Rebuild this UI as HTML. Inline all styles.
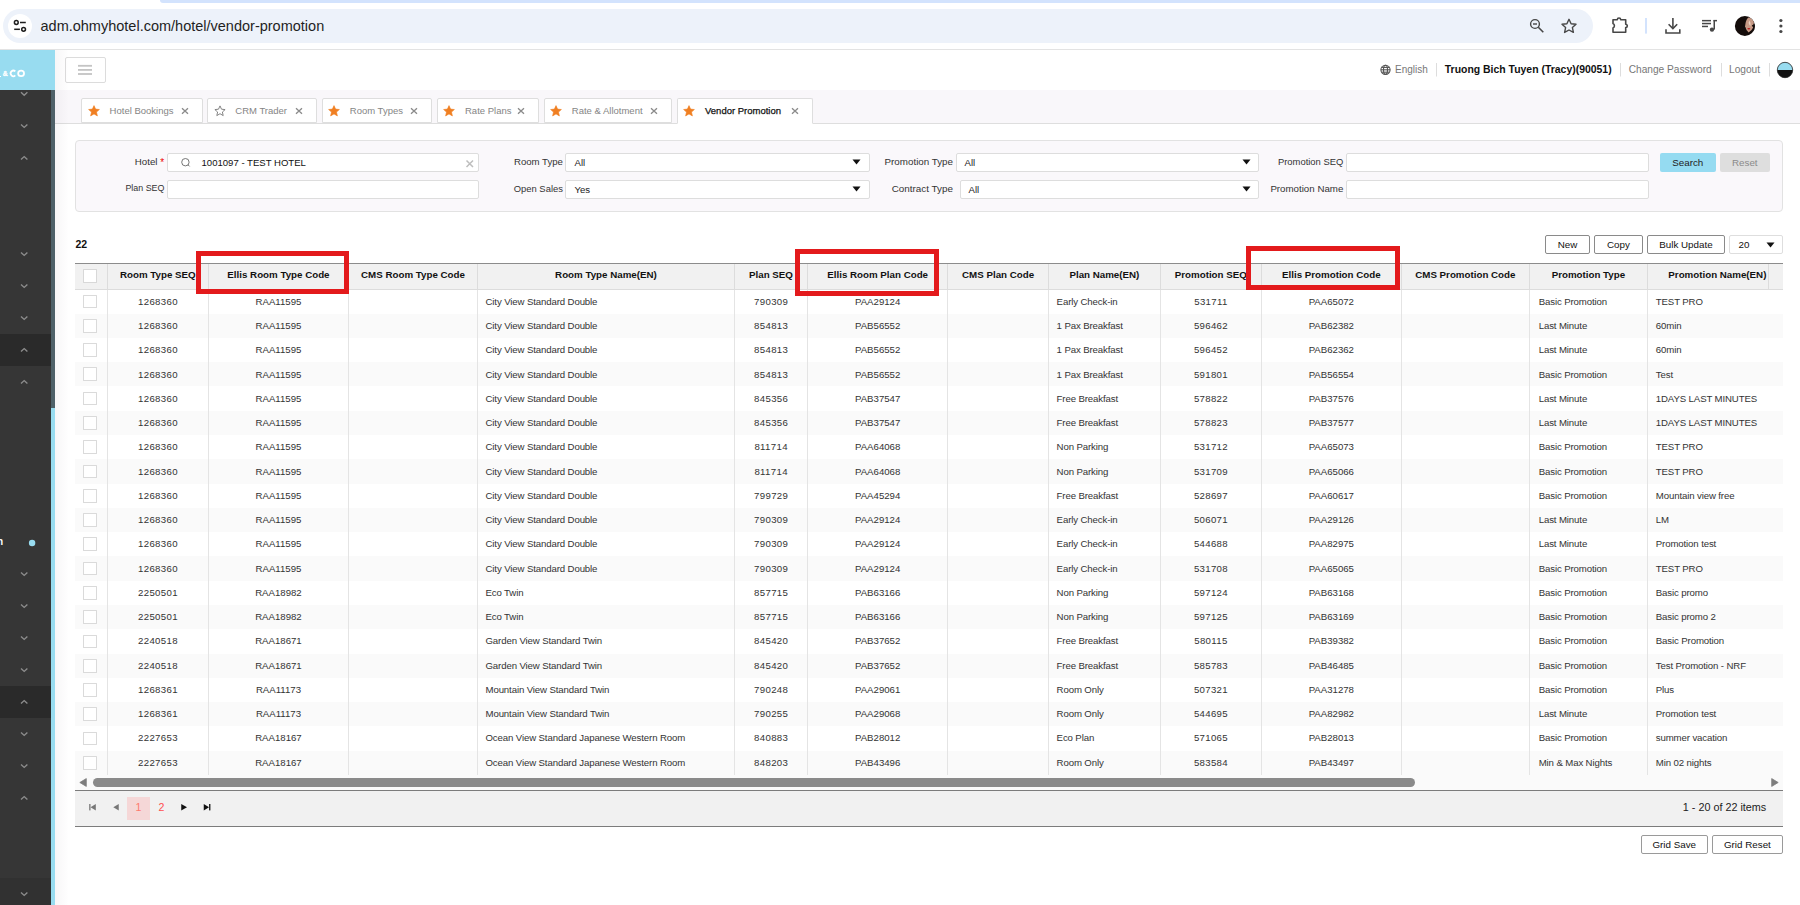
<!DOCTYPE html><html><head><meta charset="utf-8"><style>

*{box-sizing:border-box}
html,body{margin:0;padding:0}
body{width:1800px;height:905px;overflow:hidden;position:relative;background:#fff;font-family:"Liberation Sans", sans-serif;color:#222}
.a{position:absolute}
.t{position:absolute;white-space:nowrap;line-height:1}
svg{position:absolute;overflow:visible}

</style></head><body>
<div class="a" style="left:160px;top:0;width:1640px;height:3px;background:#d3e3fd;border-bottom-left-radius:6px"></div>
<div class="a" style="left:3px;top:9px;width:1590px;height:34px;border-radius:17px;background:#edf2fa"></div>
<div class="a" style="left:8px;top:14px;width:24px;height:24px;border-radius:12px;background:#fff"></div>
<svg style="left:0;top:0" width="40" height="50"><g fill="none" stroke="#1f1f1f" stroke-width="1.5"><circle cx="16.3" cy="22.5" r="1.9"/><circle cx="23.6" cy="29.3" r="1.9"/><line x1="20" y1="22.5" x2="25.8" y2="22.5"/><line x1="14.2" y1="29.3" x2="19.9" y2="29.3"/></g></svg>
<div class="t" style="left:40.5px;top:19px;font-size:14.5px;color:#1f1f1f">adm.ohmyhotel.com/hotel/vendor-promotion</div>
<svg style="left:0;top:0" width="1800" height="50"><g fill="none" stroke="#474747" stroke-width="1.4"><circle cx="1535" cy="24" r="4.4"/><line x1="1533" y1="24" x2="1537" y2="24"/><line x1="1538.3" y1="27.3" x2="1543.3" y2="32.2" stroke-width="1.6"/><path d="M1569 19.3 L1571.1 23.7 L1576 24.3 L1572.4 27.6 L1573.4 32.4 L1569 30 L1564.6 32.4 L1565.6 27.6 L1562 24.3 L1566.9 23.7 Z" stroke-linejoin="round"/><path d="M1613 19.7 H1617.3 A1.7 1.7 0 0 1 1620.7 19.7 H1625.7 V24.3 A1.6 1.6 0 0 1 1625.7 27.5 V32.3 H1613 V28 A2.5 2.5 0 0 0 1613 23.5 Z" stroke-width="1.6" stroke-linejoin="round"/></g><rect x="1645" y="18" width="2" height="15.6" fill="#d3e3fd"/><g fill="none" stroke="#474747" stroke-width="1.6"><line x1="1672.9" y1="18" x2="1672.9" y2="28.5"/><path d="M1668.6 24.3 L1672.9 28.6 L1677.2 24.3"/><path d="M1666 29.3 V33 H1679.8 V29.3"/></g><g fill="#474747"><rect x="1702" y="19.9" width="9" height="1.5"/><rect x="1702" y="22.8" width="9" height="1.5"/><rect x="1702" y="25.7" width="6" height="1.5"/><rect x="1713.5" y="20" width="1.5" height="9.5"/><rect x="1713.5" y="19.9" width="3.5" height="1.5"/><circle cx="1712" cy="29.6" r="2.2"/><circle cx="1780.9" cy="20.5" r="1.6"/><circle cx="1780.9" cy="26" r="1.6"/><circle cx="1780.9" cy="31.5" r="1.6"/></g><defs><clipPath id="av"><circle cx="1744.9" cy="26" r="10"/></clipPath></defs><g clip-path="url(#av)"><rect x="1734" y="15" width="22" height="22" fill="#140c0a"/><path d="M1748.3 17.6 Q1752.3 17.8 1753.9 21.8 L1753.4 27 Q1751.6 31.2 1748.6 32.6 Q1746.1 30.2 1745.1 26.2 Q1745.5 20.3 1748.3 17.6 Z" fill="#c79a86"/><path d="M1749.5 20.5 Q1750.8 22.5 1750.5 26 Q1749.2 25 1748.6 23 Z" fill="#ecd2c2"/><path d="M1751.8 25.5 Q1754.5 28 1753.2 33.5 L1756 36 L1756 23 Z" fill="#140c0a"/><ellipse cx="1748.8" cy="28.7" rx="1.5" ry="0.75" fill="#b5181a"/></g></svg>
<div class="a" style="left:0;top:49px;width:1800px;height:1px;background:#e3e3e3"></div>
<div class="a" style="left:0;top:50px;width:55px;height:40px;background:#98dcf0"></div>
<div class="t" style="left:2.8px;top:70.6px;font-size:6.8px;font-weight:700;color:#fff;-webkit-text-stroke:0.3px #fff">&amp;</div><div class="a" style="left:0;top:75.5px;width:1.2px;height:1.5px;background:#fff"></div>
<svg style="left:0;top:0" width="55" height="90"><g fill="none" stroke="#fff" stroke-width="1.75"><path d="M15.3 71.4 A2.75 2.75 0 1 0 15.3 75.4"/><ellipse cx="21.1" cy="73.4" rx="2.95" ry="2.7"/></g></svg>
<div class="a" style="left:0;top:90px;width:51px;height:815px;background:#363636"></div>
<div class="a" style="left:51px;top:90px;width:4px;height:318px;background:#4f6169"></div>
<div class="a" style="left:51px;top:408px;width:4px;height:497px;background:#98dcf0"></div>
<div class="a" style="left:0;top:334px;width:51px;height:32px;background:#2a2a2a"></div>
<div class="a" style="left:0;top:686px;width:51px;height:32px;background:#2a2a2a"></div>
<div class="a" style="left:0;top:878px;width:51px;height:27px;background:#313131"></div>
<svg style="left:0;top:0" width="55" height="905"><path d="M21 92.2 L24.2 95.2 L27.4 92.2 M21 124.4 L24.2 127.4 L27.4 124.4 M21 159.6 L24.2 156.6 L27.4 159.6 M21 252.4 L24.2 255.4 L27.4 252.4 M21 284.4 L24.2 287.4 L27.4 284.4 M21 316.4 L24.2 319.4 L27.4 316.4 M21 351.6 L24.2 348.6 L27.4 351.6 M21 383.6 L24.2 380.6 L27.4 383.6 M21 572.4 L24.2 575.4 L27.4 572.4 M21 604.4 L24.2 607.4 L27.4 604.4 M21 636.4 L24.2 639.4 L27.4 636.4 M21 668.4 L24.2 671.4 L27.4 668.4 M21 703.6 L24.2 700.6 L27.4 703.6 M21 732.4 L24.2 735.4 L27.4 732.4 M21 764.4 L24.2 767.4 L27.4 764.4 M21 799.6 L24.2 796.6 L27.4 799.6 M21 892.4 L24.2 895.4 L27.4 892.4" fill="none" stroke="#8c8c8c" stroke-width="1.4"/><circle cx="32.1" cy="543" r="3.2" fill="#98dcf0"/></svg>
<div class="t" style="left:-3px;top:536.5px;font-size:10px;font-weight:700;color:#fff">n</div>
<div class="a" style="left:65px;top:57px;width:40.5px;height:26px;border:1px solid #dcdcdc;border-radius:2px;background:#fff"></div>
<svg style="left:0;top:0" width="120" height="90"><g fill="#c4c4c4"><rect x="78" y="64.9" width="14" height="1.8"/><rect x="78" y="69" width="14" height="1.8"/><rect x="78" y="73.1" width="14" height="1.8"/></g></svg>
<svg style="left:0;top:0" width="1800" height="90"><g fill="none" stroke="#555" stroke-width="1.1"><circle cx="1385.5" cy="69.8" r="4.6"/><ellipse cx="1385.5" cy="69.8" rx="2" ry="4.6"/><line x1="1380.9" y1="69.8" x2="1390.1" y2="69.8"/><line x1="1381.5" y1="67.4" x2="1389.5" y2="67.4"/><line x1="1381.5" y1="72.2" x2="1389.5" y2="72.2"/></g><g fill="#ddd"><rect x="1436" y="63" width="1" height="13.5"/><rect x="1620" y="63" width="1" height="13.5"/><rect x="1721" y="63" width="1" height="13.5"/><rect x="1769" y="63" width="1" height="13.5"/></g><path d="M1777.3 70 A7.7 7.7 0 0 1 1792.7 70 Z" fill="#98dcf0"/><path d="M1777.3 70 A7.7 7.7 0 0 0 1792.7 70 Z" fill="#111"/><circle cx="1785" cy="70" r="7.7" fill="none" stroke="#222" stroke-width="0.8"/></svg>
<div class="t" style="left:1395px;top:64.5px;font-size:10px;color:#777">English</div>
<div class="t" style="left:1444.8px;top:64.5px;font-size:10.45px;font-weight:700;color:#111">Truong Bich Tuyen (Tracy)(90051)</div>
<div class="t" style="left:1628.7px;top:64.5px;font-size:10.16px;color:#777">Change Password</div>
<div class="t" style="left:1729px;top:64.5px;font-size:10.16px;color:#777">Logout</div>
<div class="a" style="left:55px;top:90px;width:1745px;height:34px;background:#f9f7fa;border-bottom:1px solid #dedede"></div>
<div class="a" style="left:81.3px;top:98px;width:121.9px;height:25.3px;background:#fff;border:1px solid #dedede;border-radius:2px 2px 0 0"></div>
<svg style="left:87.8px;top:104.5px" width="12" height="12"><path d="M6 0.6 L7.6 4.1 L11.4 4.5 L8.5 7.1 L9.4 10.9 L6 8.9 L2.6 10.9 L3.5 7.1 L0.6 4.5 L4.4 4.1 Z" fill="#f07f22" stroke="#f07f22" stroke-width="0.6" stroke-linejoin="round"/></svg>
<div class="t" style="left:109.6px;top:106px;font-size:9.5px;color:#858585;">Hotel Bookings</div>
<svg style="left:180.9px;top:107px" width="8" height="8"><path d="M1 1.2 L7 6.8 M7 1.2 L1 6.8" stroke="#8a8a8a" stroke-width="1.3"/></svg>
<div class="a" style="left:207px;top:98px;width:109.8px;height:25.3px;background:#fff;border:1px solid #dedede;border-radius:2px 2px 0 0"></div>
<svg style="left:213.5px;top:104.5px" width="12" height="12"><path d="M6 0.9 L7.5 4.2 L11.1 4.6 L8.4 7.0 L9.2 10.6 L6 8.7 L2.8 10.6 L3.6 7.0 L0.9 4.6 L4.5 4.2 Z" fill="none" stroke="#777" stroke-width="0.9" stroke-linejoin="round"/></svg>
<div class="t" style="left:235.3px;top:106px;font-size:9.5px;color:#858585;">CRM Trader</div>
<svg style="left:294.5px;top:107px" width="8" height="8"><path d="M1 1.2 L7 6.8 M7 1.2 L1 6.8" stroke="#8a8a8a" stroke-width="1.3"/></svg>
<div class="a" style="left:321.5px;top:98px;width:110.3px;height:25.3px;background:#fff;border:1px solid #dedede;border-radius:2px 2px 0 0"></div>
<svg style="left:328.0px;top:104.5px" width="12" height="12"><path d="M6 0.6 L7.6 4.1 L11.4 4.5 L8.5 7.1 L9.4 10.9 L6 8.9 L2.6 10.9 L3.5 7.1 L0.6 4.5 L4.4 4.1 Z" fill="#f07f22" stroke="#f07f22" stroke-width="0.6" stroke-linejoin="round"/></svg>
<div class="t" style="left:349.8px;top:106px;font-size:9.5px;color:#858585;">Room Types</div>
<svg style="left:409.5px;top:107px" width="8" height="8"><path d="M1 1.2 L7 6.8 M7 1.2 L1 6.8" stroke="#8a8a8a" stroke-width="1.3"/></svg>
<div class="a" style="left:436.7px;top:98px;width:102.1px;height:25.3px;background:#fff;border:1px solid #dedede;border-radius:2px 2px 0 0"></div>
<svg style="left:443.2px;top:104.5px" width="12" height="12"><path d="M6 0.6 L7.6 4.1 L11.4 4.5 L8.5 7.1 L9.4 10.9 L6 8.9 L2.6 10.9 L3.5 7.1 L0.6 4.5 L4.4 4.1 Z" fill="#f07f22" stroke="#f07f22" stroke-width="0.6" stroke-linejoin="round"/></svg>
<div class="t" style="left:465.0px;top:106px;font-size:9.5px;color:#858585;">Rate Plans</div>
<svg style="left:516.5px;top:107px" width="8" height="8"><path d="M1 1.2 L7 6.8 M7 1.2 L1 6.8" stroke="#8a8a8a" stroke-width="1.3"/></svg>
<div class="a" style="left:543.5px;top:98px;width:128.3px;height:25.3px;background:#fff;border:1px solid #dedede;border-radius:2px 2px 0 0"></div>
<svg style="left:550.0px;top:104.5px" width="12" height="12"><path d="M6 0.6 L7.6 4.1 L11.4 4.5 L8.5 7.1 L9.4 10.9 L6 8.9 L2.6 10.9 L3.5 7.1 L0.6 4.5 L4.4 4.1 Z" fill="#f07f22" stroke="#f07f22" stroke-width="0.6" stroke-linejoin="round"/></svg>
<div class="t" style="left:571.8px;top:106px;font-size:9.5px;color:#858585;">Rate &amp; Allotment</div>
<svg style="left:649.5px;top:107px" width="8" height="8"><path d="M1 1.2 L7 6.8 M7 1.2 L1 6.8" stroke="#8a8a8a" stroke-width="1.3"/></svg>
<div class="a" style="left:676.7px;top:98px;width:136.8px;height:26px;background:#fff;border:1px solid #dedede;border-bottom:1px solid #fff;border-radius:2px 2px 0 0"></div>
<svg style="left:683.2px;top:104.5px" width="12" height="12"><path d="M6 0.6 L7.6 4.1 L11.4 4.5 L8.5 7.1 L9.4 10.9 L6 8.9 L2.6 10.9 L3.5 7.1 L0.6 4.5 L4.4 4.1 Z" fill="#f07f22" stroke="#f07f22" stroke-width="0.6" stroke-linejoin="round"/></svg>
<div class="t" style="left:705.0px;top:106px;font-size:9.5px;color:#111;-webkit-text-stroke:0.25px #111;">Vendor Promotion</div>
<svg style="left:791.2px;top:107px" width="8" height="8"><path d="M1 1.2 L7 6.8 M7 1.2 L1 6.8" stroke="#8a8a8a" stroke-width="1.3"/></svg>
<div class="a" style="left:55px;top:50px;width:14px;height:855px;background:linear-gradient(to right,rgba(40,0,40,0.035),rgba(40,0,40,0))"></div>
<div class="a" style="left:75px;top:140px;width:1707.5px;height:72px;background:#faf8fb;border:1px solid #e2e2e2;border-radius:4px"></div>
<div class="a" style="left:167px;top:153px;width:311.5px;height:19px;background:#fff;border:1px solid #dddddd;border-radius:2px"></div>
<div class="a" style="left:167px;top:180px;width:311.5px;height:19px;background:#fff;border:1px solid #dddddd;border-radius:2px"></div>
<div class="t" style="right:1642.5px;top:156.95px;font-size:9.72px;color:#333">Hotel</div>
<div class="t" style="left:160.2px;top:157.8px;font-size:10px;color:#e00">*</div>
<div class="t" style="right:1635.6px;top:184.35px;font-size:8.9px;color:#333">Plan SEQ</div>
<svg style="left:0;top:0" width="500" height="220"><g fill="none" stroke="#666" stroke-width="0.9"><circle cx="185.4" cy="162.2" r="3.7"/><line x1="188" y1="164.8" x2="189.6" y2="166.4"/></g><path d="M466.5 160.5 L473 167 M473 160.5 L466.5 167" stroke="#bdbdbd" stroke-width="1.5"/></svg>
<div class="t" style="left:201.5px;top:157.6px;font-size:9.57px;color:#111">1001097 - TEST HOTEL</div>
<div class="a" style="left:565px;top:153px;width:304.5px;height:19px;background:#fff;border:1px solid #dddddd;border-radius:2px"></div>
<div class="a" style="left:565px;top:180px;width:304.5px;height:19px;background:#fff;border:1px solid #dddddd;border-radius:2px"></div>
<div class="t" style="right:1237.1px;top:157.00px;font-size:9.62px;color:#333">Room Type</div>
<div class="t" style="right:1237.1px;top:184.10px;font-size:9.41px;color:#333">Open Sales</div>
<div class="t" style="left:574.5px;top:158px;font-size:9.6px;color:#222">All</div>
<div class="t" style="left:574.5px;top:185px;font-size:9.6px;color:#222">Yes</div>
<svg style="left:851.5px;top:159.3px" width="9" height="6"><path d="M0.5 0.5 H8.5 L4.5 5.5 Z" fill="#111"/></svg>
<svg style="left:851.5px;top:186.3px" width="9" height="6"><path d="M0.5 0.5 H8.5 L4.5 5.5 Z" fill="#111"/></svg>
<div class="a" style="left:956px;top:153px;width:302.5px;height:19px;background:#fff;border:1px solid #dddddd;border-radius:2px"></div>
<div class="a" style="left:960px;top:180px;width:298.5px;height:19px;background:#fff;border:1px solid #dddddd;border-radius:2px"></div>
<div class="t" style="right:847px;top:156.91px;font-size:9.81px;color:#333">Promotion Type</div>
<div class="t" style="right:847px;top:183.86px;font-size:9.9px;color:#333">Contract Type</div>
<div class="t" style="left:964.5px;top:158px;font-size:9.6px;color:#222">All</div>
<div class="t" style="left:968.5px;top:185px;font-size:9.6px;color:#222">All</div>
<svg style="left:1241.5px;top:159.3px" width="9" height="6"><path d="M0.5 0.5 H8.5 L4.5 5.5 Z" fill="#111"/></svg>
<svg style="left:1241.5px;top:186.3px" width="9" height="6"><path d="M0.5 0.5 H8.5 L4.5 5.5 Z" fill="#111"/></svg>
<div class="a" style="left:1346px;top:153px;width:302.5px;height:19px;background:#fff;border:1px solid #dddddd;border-radius:2px"></div>
<div class="a" style="left:1346px;top:180px;width:302.5px;height:19px;background:#fff;border:1px solid #dddddd;border-radius:2px"></div>
<div class="t" style="right:456.70000000000005px;top:157.10px;font-size:9.41px;color:#333">Promotion SEQ</div>
<div class="t" style="right:456.70000000000005px;top:183.95px;font-size:9.72px;color:#333">Promotion Name</div>
<div class="a" style="left:1660px;top:153px;width:55.6px;height:19px;background:#95dbf1;border-radius:2px"></div>
<div class="t" style="left:1660px;top:157.6px;width:55.6px;text-align:center;font-size:9.8px;color:#222">Search</div>
<div class="a" style="left:1720px;top:153px;width:49.6px;height:19px;background:#dedede;border-radius:2px"></div>
<div class="t" style="left:1720px;top:157.6px;width:49.6px;text-align:center;font-size:9.8px;color:#8a8a8a">Reset</div>
<div class="t" style="left:75.4px;top:238.7px;font-size:10.5px;font-weight:700;color:#111">22</div>
<div class="a" style="left:1545.3px;top:235.3px;width:44.299999999999955px;height:18.299999999999983px;background:#fff;border:1px solid #8a8a8a;border-radius:2px"></div>
<div class="t" style="left:1545.3px;top:239.54999999999998px;width:44.299999999999955px;text-align:center;font-size:9.8px;color:#111">New</div>
<div class="a" style="left:1594.2px;top:235.3px;width:48.59999999999991px;height:18.299999999999983px;background:#fff;border:1px solid #8a8a8a;border-radius:2px"></div>
<div class="t" style="left:1594.2px;top:239.54999999999998px;width:48.59999999999991px;text-align:center;font-size:9.8px;color:#111">Copy</div>
<div class="a" style="left:1647.2px;top:235.3px;width:77.5px;height:18.299999999999983px;background:#fff;border:1px solid #8a8a8a;border-radius:2px"></div>
<div class="t" style="left:1647.2px;top:239.54999999999998px;width:77.5px;text-align:center;font-size:9.8px;color:#111">Bulk Update</div>
<div class="a" style="left:1729.2px;top:235.3px;width:53.4px;height:18.3px;background:#fff;border:1px solid #dedede;border-radius:2px"></div>
<div class="t" style="left:1738.6px;top:239.6px;font-size:9.8px;color:#111">20</div>
<svg style="left:1765.5px;top:241.5px" width="9" height="6"><path d="M0.5 0.5 H8.5 L4.5 5.5 Z" fill="#111"/></svg>
<div class="a" style="left:75px;top:263px;width:1708px;height:1px;background:#8c8c8c"></div>
<div class="a" style="left:75px;top:264px;width:1708px;height:26px;background:#f1f1f1;border-bottom:1px solid #dcdcdc"></div>
<div class="a" style="left:75px;top:264.4px;width:1694px;height:24.900000000000034px;overflow:hidden">
<div class="t" style="left:32.2px;top:5.750000000000017px;width:101.2px;text-align:center;font-size:9.75px;font-weight:700;color:#111">Room Type SEQ</div>
<div class="t" style="left:133.4px;top:5.750000000000017px;width:140.1px;text-align:center;font-size:9.75px;font-weight:700;color:#111">Ellis Room Type Code</div>
<div class="t" style="left:273.5px;top:5.750000000000017px;width:129.0px;text-align:center;font-size:9.75px;font-weight:700;color:#111">CMS Room Type Code</div>
<div class="t" style="left:402.5px;top:5.750000000000017px;width:256.9px;text-align:center;font-size:9.75px;font-weight:700;color:#111">Room Type Name(EN)</div>
<div class="t" style="left:659.4px;top:5.750000000000017px;width:73.20000000000005px;text-align:center;font-size:9.75px;font-weight:700;color:#111">Plan SEQ</div>
<div class="t" style="left:732.6px;top:5.750000000000017px;width:140.10000000000002px;text-align:center;font-size:9.75px;font-weight:700;color:#111">Ellis Room Plan Code</div>
<div class="t" style="left:872.7px;top:5.750000000000017px;width:100.79999999999995px;text-align:center;font-size:9.75px;font-weight:700;color:#111">CMS Plan Code</div>
<div class="t" style="left:973.5px;top:5.750000000000017px;width:111.79999999999995px;text-align:center;font-size:9.75px;font-weight:700;color:#111">Plan Name(EN)</div>
<div class="t" style="left:1085.3px;top:5.750000000000017px;width:101.0px;text-align:center;font-size:9.75px;font-weight:700;color:#111">Promotion SEQ</div>
<div class="t" style="left:1186.3px;top:5.750000000000017px;width:140.0px;text-align:center;font-size:9.75px;font-weight:700;color:#111">Ellis Promotion Code</div>
<div class="t" style="left:1326.3px;top:5.750000000000017px;width:128.10000000000014px;text-align:center;font-size:9.75px;font-weight:700;color:#111">CMS Promotion Code</div>
<div class="t" style="left:1454.4px;top:5.750000000000017px;width:118.0px;text-align:center;font-size:9.75px;font-weight:700;color:#111">Promotion Type</div>
<div class="t" style="left:1572.4px;top:5.750000000000017px;width:140.0px;text-align:center;font-size:9.75px;font-weight:700;color:#111">Promotion Name(EN)</div>
<div class="a" style="left:32px;top:0;width:1px;height:24.900000000000034px;background:#dcdcdc"></div>
<div class="a" style="left:133px;top:0;width:1px;height:24.900000000000034px;background:#dcdcdc"></div>
<div class="a" style="left:273px;top:0;width:1px;height:24.900000000000034px;background:#dcdcdc"></div>
<div class="a" style="left:402px;top:0;width:1px;height:24.900000000000034px;background:#dcdcdc"></div>
<div class="a" style="left:659px;top:0;width:1px;height:24.900000000000034px;background:#dcdcdc"></div>
<div class="a" style="left:732px;top:0;width:1px;height:24.900000000000034px;background:#dcdcdc"></div>
<div class="a" style="left:872px;top:0;width:1px;height:24.900000000000034px;background:#dcdcdc"></div>
<div class="a" style="left:973px;top:0;width:1px;height:24.900000000000034px;background:#dcdcdc"></div>
<div class="a" style="left:1085px;top:0;width:1px;height:24.900000000000034px;background:#dcdcdc"></div>
<div class="a" style="left:1186px;top:0;width:1px;height:24.900000000000034px;background:#dcdcdc"></div>
<div class="a" style="left:1326px;top:0;width:1px;height:24.900000000000034px;background:#dcdcdc"></div>
<div class="a" style="left:1454px;top:0;width:1px;height:24.900000000000034px;background:#dcdcdc"></div>
<div class="a" style="left:1572px;top:0;width:1px;height:24.900000000000034px;background:#dcdcdc"></div>
<div class="a" style="left:1693px;top:0;width:1px;height:24.900000000000034px;background:#dcdcdc"></div>
</div>
<div class="a" style="left:83.2px;top:269px;width:13.6px;height:13.6px;background:#fff;border:1px solid #d8d8d8;border-radius:0.5px"></div>
<div class="a" style="left:75px;top:289.3px;width:1708px;height:485.7px;overflow:hidden">
<div class="a" style="left:0;top:0.0px;width:1708px;height:24.285px;background:#fff"></div>
<div class="a" style="left:8.1px;top:5.3425px;width:13.6px;height:13.6px;background:#fff;border:1px solid #dadada;border-radius:0.5px"></div>
<div class="t" style="left:32.37px;top:7.44px;width:101.2px;text-align:center;font-size:9.65px;letter-spacing:0.33px;color:#333">1268360</div>
<div class="t" style="left:133.40px;top:7.44px;width:140.1px;text-align:center;font-size:9.65px;letter-spacing:0px;color:#333">RAA11595</div>
<div class="t" style="left:410.5px;top:7.44px;font-size:9.65px;letter-spacing:-0.12px;color:#333">City View Standard Double</div>
<div class="t" style="left:659.56px;top:7.44px;width:73.20000000000005px;text-align:center;font-size:9.65px;letter-spacing:0.33px;color:#333">790309</div>
<div class="t" style="left:732.60px;top:7.44px;width:140.10000000000002px;text-align:center;font-size:9.65px;letter-spacing:0px;color:#333">PAA29124</div>
<div class="t" style="left:981.6px;top:7.44px;font-size:9.65px;letter-spacing:-0.12px;color:#333">Early Check-in</div>
<div class="t" style="left:1085.46px;top:7.44px;width:101.0px;text-align:center;font-size:9.65px;letter-spacing:0.33px;color:#333">531711</div>
<div class="t" style="left:1186.30px;top:7.44px;width:140.0px;text-align:center;font-size:9.65px;letter-spacing:0px;color:#333">PAA65072</div>
<div class="t" style="left:1463.7px;top:7.44px;font-size:9.65px;letter-spacing:-0.12px;color:#333">Basic Promotion</div>
<div class="t" style="left:1580.8000000000002px;top:7.44px;font-size:9.65px;letter-spacing:-0.12px;color:#333">TEST PRO</div>
<div class="a" style="left:0;top:24.285px;width:1708px;height:24.285px;background:#fafafa"></div>
<div class="a" style="left:8.1px;top:29.6275px;width:13.6px;height:13.6px;background:#fff;border:1px solid #dadada;border-radius:0.5px"></div>
<div class="t" style="left:32.37px;top:31.70px;width:101.2px;text-align:center;font-size:9.65px;letter-spacing:0.33px;color:#333">1268360</div>
<div class="t" style="left:133.40px;top:31.70px;width:140.1px;text-align:center;font-size:9.65px;letter-spacing:0px;color:#333">RAA11595</div>
<div class="t" style="left:410.5px;top:31.70px;font-size:9.65px;letter-spacing:-0.12px;color:#333">City View Standard Double</div>
<div class="t" style="left:659.56px;top:31.70px;width:73.20000000000005px;text-align:center;font-size:9.65px;letter-spacing:0.33px;color:#333">854813</div>
<div class="t" style="left:732.60px;top:31.70px;width:140.10000000000002px;text-align:center;font-size:9.65px;letter-spacing:0px;color:#333">PAB56552</div>
<div class="t" style="left:981.6px;top:31.70px;font-size:9.65px;letter-spacing:-0.12px;color:#333">1 Pax Breakfast</div>
<div class="t" style="left:1085.46px;top:31.70px;width:101.0px;text-align:center;font-size:9.65px;letter-spacing:0.33px;color:#333">596462</div>
<div class="t" style="left:1186.30px;top:31.70px;width:140.0px;text-align:center;font-size:9.65px;letter-spacing:0px;color:#333">PAB62382</div>
<div class="t" style="left:1463.7px;top:31.70px;font-size:9.65px;letter-spacing:-0.12px;color:#333">Last Minute</div>
<div class="t" style="left:1580.8000000000002px;top:31.70px;font-size:9.65px;letter-spacing:-0.12px;color:#333">60min</div>
<div class="a" style="left:0;top:48.57px;width:1708px;height:24.285px;background:#fff"></div>
<div class="a" style="left:8.1px;top:53.9125px;width:13.6px;height:13.6px;background:#fff;border:1px solid #dadada;border-radius:0.5px"></div>
<div class="t" style="left:32.37px;top:55.96px;width:101.2px;text-align:center;font-size:9.65px;letter-spacing:0.33px;color:#333">1268360</div>
<div class="t" style="left:133.40px;top:55.96px;width:140.1px;text-align:center;font-size:9.65px;letter-spacing:0px;color:#333">RAA11595</div>
<div class="t" style="left:410.5px;top:55.96px;font-size:9.65px;letter-spacing:-0.12px;color:#333">City View Standard Double</div>
<div class="t" style="left:659.56px;top:55.96px;width:73.20000000000005px;text-align:center;font-size:9.65px;letter-spacing:0.33px;color:#333">854813</div>
<div class="t" style="left:732.60px;top:55.96px;width:140.10000000000002px;text-align:center;font-size:9.65px;letter-spacing:0px;color:#333">PAB56552</div>
<div class="t" style="left:981.6px;top:55.96px;font-size:9.65px;letter-spacing:-0.12px;color:#333">1 Pax Breakfast</div>
<div class="t" style="left:1085.46px;top:55.96px;width:101.0px;text-align:center;font-size:9.65px;letter-spacing:0.33px;color:#333">596452</div>
<div class="t" style="left:1186.30px;top:55.96px;width:140.0px;text-align:center;font-size:9.65px;letter-spacing:0px;color:#333">PAB62362</div>
<div class="t" style="left:1463.7px;top:55.96px;font-size:9.65px;letter-spacing:-0.12px;color:#333">Last Minute</div>
<div class="t" style="left:1580.8000000000002px;top:55.96px;font-size:9.65px;letter-spacing:-0.12px;color:#333">60min</div>
<div class="a" style="left:0;top:72.855px;width:1708px;height:24.285px;background:#fafafa"></div>
<div class="a" style="left:8.1px;top:78.1975px;width:13.6px;height:13.6px;background:#fff;border:1px solid #dadada;border-radius:0.5px"></div>
<div class="t" style="left:32.37px;top:80.22px;width:101.2px;text-align:center;font-size:9.65px;letter-spacing:0.33px;color:#333">1268360</div>
<div class="t" style="left:133.40px;top:80.22px;width:140.1px;text-align:center;font-size:9.65px;letter-spacing:0px;color:#333">RAA11595</div>
<div class="t" style="left:410.5px;top:80.22px;font-size:9.65px;letter-spacing:-0.12px;color:#333">City View Standard Double</div>
<div class="t" style="left:659.56px;top:80.22px;width:73.20000000000005px;text-align:center;font-size:9.65px;letter-spacing:0.33px;color:#333">854813</div>
<div class="t" style="left:732.60px;top:80.22px;width:140.10000000000002px;text-align:center;font-size:9.65px;letter-spacing:0px;color:#333">PAB56552</div>
<div class="t" style="left:981.6px;top:80.22px;font-size:9.65px;letter-spacing:-0.12px;color:#333">1 Pax Breakfast</div>
<div class="t" style="left:1085.46px;top:80.22px;width:101.0px;text-align:center;font-size:9.65px;letter-spacing:0.33px;color:#333">591801</div>
<div class="t" style="left:1186.30px;top:80.22px;width:140.0px;text-align:center;font-size:9.65px;letter-spacing:0px;color:#333">PAB56554</div>
<div class="t" style="left:1463.7px;top:80.22px;font-size:9.65px;letter-spacing:-0.12px;color:#333">Basic Promotion</div>
<div class="t" style="left:1580.8000000000002px;top:80.22px;font-size:9.65px;letter-spacing:-0.12px;color:#333">Test</div>
<div class="a" style="left:0;top:97.14px;width:1708px;height:24.285px;background:#fff"></div>
<div class="a" style="left:8.1px;top:102.4825px;width:13.6px;height:13.6px;background:#fff;border:1px solid #dadada;border-radius:0.5px"></div>
<div class="t" style="left:32.37px;top:104.48px;width:101.2px;text-align:center;font-size:9.65px;letter-spacing:0.33px;color:#333">1268360</div>
<div class="t" style="left:133.40px;top:104.48px;width:140.1px;text-align:center;font-size:9.65px;letter-spacing:0px;color:#333">RAA11595</div>
<div class="t" style="left:410.5px;top:104.48px;font-size:9.65px;letter-spacing:-0.12px;color:#333">City View Standard Double</div>
<div class="t" style="left:659.56px;top:104.48px;width:73.20000000000005px;text-align:center;font-size:9.65px;letter-spacing:0.33px;color:#333">845356</div>
<div class="t" style="left:732.60px;top:104.48px;width:140.10000000000002px;text-align:center;font-size:9.65px;letter-spacing:0px;color:#333">PAB37547</div>
<div class="t" style="left:981.6px;top:104.48px;font-size:9.65px;letter-spacing:-0.12px;color:#333">Free Breakfast</div>
<div class="t" style="left:1085.46px;top:104.48px;width:101.0px;text-align:center;font-size:9.65px;letter-spacing:0.33px;color:#333">578822</div>
<div class="t" style="left:1186.30px;top:104.48px;width:140.0px;text-align:center;font-size:9.65px;letter-spacing:0px;color:#333">PAB37576</div>
<div class="t" style="left:1463.7px;top:104.48px;font-size:9.65px;letter-spacing:-0.12px;color:#333">Last Minute</div>
<div class="t" style="left:1580.8000000000002px;top:104.48px;font-size:9.65px;letter-spacing:-0.12px;color:#333">1DAYS LAST MINUTES</div>
<div class="a" style="left:0;top:121.425px;width:1708px;height:24.285px;background:#fafafa"></div>
<div class="a" style="left:8.1px;top:126.7675px;width:13.6px;height:13.6px;background:#fff;border:1px solid #dadada;border-radius:0.5px"></div>
<div class="t" style="left:32.37px;top:128.74px;width:101.2px;text-align:center;font-size:9.65px;letter-spacing:0.33px;color:#333">1268360</div>
<div class="t" style="left:133.40px;top:128.74px;width:140.1px;text-align:center;font-size:9.65px;letter-spacing:0px;color:#333">RAA11595</div>
<div class="t" style="left:410.5px;top:128.74px;font-size:9.65px;letter-spacing:-0.12px;color:#333">City View Standard Double</div>
<div class="t" style="left:659.56px;top:128.74px;width:73.20000000000005px;text-align:center;font-size:9.65px;letter-spacing:0.33px;color:#333">845356</div>
<div class="t" style="left:732.60px;top:128.74px;width:140.10000000000002px;text-align:center;font-size:9.65px;letter-spacing:0px;color:#333">PAB37547</div>
<div class="t" style="left:981.6px;top:128.74px;font-size:9.65px;letter-spacing:-0.12px;color:#333">Free Breakfast</div>
<div class="t" style="left:1085.46px;top:128.74px;width:101.0px;text-align:center;font-size:9.65px;letter-spacing:0.33px;color:#333">578823</div>
<div class="t" style="left:1186.30px;top:128.74px;width:140.0px;text-align:center;font-size:9.65px;letter-spacing:0px;color:#333">PAB37577</div>
<div class="t" style="left:1463.7px;top:128.74px;font-size:9.65px;letter-spacing:-0.12px;color:#333">Last Minute</div>
<div class="t" style="left:1580.8000000000002px;top:128.74px;font-size:9.65px;letter-spacing:-0.12px;color:#333">1DAYS LAST MINUTES</div>
<div class="a" style="left:0;top:145.71px;width:1708px;height:24.285px;background:#fff"></div>
<div class="a" style="left:8.1px;top:151.0525px;width:13.6px;height:13.6px;background:#fff;border:1px solid #dadada;border-radius:0.5px"></div>
<div class="t" style="left:32.37px;top:153.00px;width:101.2px;text-align:center;font-size:9.65px;letter-spacing:0.33px;color:#333">1268360</div>
<div class="t" style="left:133.40px;top:153.00px;width:140.1px;text-align:center;font-size:9.65px;letter-spacing:0px;color:#333">RAA11595</div>
<div class="t" style="left:410.5px;top:153.00px;font-size:9.65px;letter-spacing:-0.12px;color:#333">City View Standard Double</div>
<div class="t" style="left:659.56px;top:153.00px;width:73.20000000000005px;text-align:center;font-size:9.65px;letter-spacing:0.33px;color:#333">811714</div>
<div class="t" style="left:732.60px;top:153.00px;width:140.10000000000002px;text-align:center;font-size:9.65px;letter-spacing:0px;color:#333">PAA64068</div>
<div class="t" style="left:981.6px;top:153.00px;font-size:9.65px;letter-spacing:-0.12px;color:#333">Non Parking</div>
<div class="t" style="left:1085.46px;top:153.00px;width:101.0px;text-align:center;font-size:9.65px;letter-spacing:0.33px;color:#333">531712</div>
<div class="t" style="left:1186.30px;top:153.00px;width:140.0px;text-align:center;font-size:9.65px;letter-spacing:0px;color:#333">PAA65073</div>
<div class="t" style="left:1463.7px;top:153.00px;font-size:9.65px;letter-spacing:-0.12px;color:#333">Basic Promotion</div>
<div class="t" style="left:1580.8000000000002px;top:153.00px;font-size:9.65px;letter-spacing:-0.12px;color:#333">TEST PRO</div>
<div class="a" style="left:0;top:169.995px;width:1708px;height:24.285px;background:#fafafa"></div>
<div class="a" style="left:8.1px;top:175.3375px;width:13.6px;height:13.6px;background:#fff;border:1px solid #dadada;border-radius:0.5px"></div>
<div class="t" style="left:32.37px;top:177.26px;width:101.2px;text-align:center;font-size:9.65px;letter-spacing:0.33px;color:#333">1268360</div>
<div class="t" style="left:133.40px;top:177.26px;width:140.1px;text-align:center;font-size:9.65px;letter-spacing:0px;color:#333">RAA11595</div>
<div class="t" style="left:410.5px;top:177.26px;font-size:9.65px;letter-spacing:-0.12px;color:#333">City View Standard Double</div>
<div class="t" style="left:659.56px;top:177.26px;width:73.20000000000005px;text-align:center;font-size:9.65px;letter-spacing:0.33px;color:#333">811714</div>
<div class="t" style="left:732.60px;top:177.26px;width:140.10000000000002px;text-align:center;font-size:9.65px;letter-spacing:0px;color:#333">PAA64068</div>
<div class="t" style="left:981.6px;top:177.26px;font-size:9.65px;letter-spacing:-0.12px;color:#333">Non Parking</div>
<div class="t" style="left:1085.46px;top:177.26px;width:101.0px;text-align:center;font-size:9.65px;letter-spacing:0.33px;color:#333">531709</div>
<div class="t" style="left:1186.30px;top:177.26px;width:140.0px;text-align:center;font-size:9.65px;letter-spacing:0px;color:#333">PAA65066</div>
<div class="t" style="left:1463.7px;top:177.26px;font-size:9.65px;letter-spacing:-0.12px;color:#333">Basic Promotion</div>
<div class="t" style="left:1580.8000000000002px;top:177.26px;font-size:9.65px;letter-spacing:-0.12px;color:#333">TEST PRO</div>
<div class="a" style="left:0;top:194.28px;width:1708px;height:24.285px;background:#fff"></div>
<div class="a" style="left:8.1px;top:199.6225px;width:13.6px;height:13.6px;background:#fff;border:1px solid #dadada;border-radius:0.5px"></div>
<div class="t" style="left:32.37px;top:201.52px;width:101.2px;text-align:center;font-size:9.65px;letter-spacing:0.33px;color:#333">1268360</div>
<div class="t" style="left:133.40px;top:201.52px;width:140.1px;text-align:center;font-size:9.65px;letter-spacing:0px;color:#333">RAA11595</div>
<div class="t" style="left:410.5px;top:201.52px;font-size:9.65px;letter-spacing:-0.12px;color:#333">City View Standard Double</div>
<div class="t" style="left:659.56px;top:201.52px;width:73.20000000000005px;text-align:center;font-size:9.65px;letter-spacing:0.33px;color:#333">799729</div>
<div class="t" style="left:732.60px;top:201.52px;width:140.10000000000002px;text-align:center;font-size:9.65px;letter-spacing:0px;color:#333">PAA45294</div>
<div class="t" style="left:981.6px;top:201.52px;font-size:9.65px;letter-spacing:-0.12px;color:#333">Free Breakfast</div>
<div class="t" style="left:1085.46px;top:201.52px;width:101.0px;text-align:center;font-size:9.65px;letter-spacing:0.33px;color:#333">528697</div>
<div class="t" style="left:1186.30px;top:201.52px;width:140.0px;text-align:center;font-size:9.65px;letter-spacing:0px;color:#333">PAA60617</div>
<div class="t" style="left:1463.7px;top:201.52px;font-size:9.65px;letter-spacing:-0.12px;color:#333">Basic Promotion</div>
<div class="t" style="left:1580.8000000000002px;top:201.52px;font-size:9.65px;letter-spacing:-0.12px;color:#333">Mountain view free</div>
<div class="a" style="left:0;top:218.565px;width:1708px;height:24.285px;background:#fafafa"></div>
<div class="a" style="left:8.1px;top:223.9075px;width:13.6px;height:13.6px;background:#fff;border:1px solid #dadada;border-radius:0.5px"></div>
<div class="t" style="left:32.37px;top:225.78px;width:101.2px;text-align:center;font-size:9.65px;letter-spacing:0.33px;color:#333">1268360</div>
<div class="t" style="left:133.40px;top:225.78px;width:140.1px;text-align:center;font-size:9.65px;letter-spacing:0px;color:#333">RAA11595</div>
<div class="t" style="left:410.5px;top:225.78px;font-size:9.65px;letter-spacing:-0.12px;color:#333">City View Standard Double</div>
<div class="t" style="left:659.56px;top:225.78px;width:73.20000000000005px;text-align:center;font-size:9.65px;letter-spacing:0.33px;color:#333">790309</div>
<div class="t" style="left:732.60px;top:225.78px;width:140.10000000000002px;text-align:center;font-size:9.65px;letter-spacing:0px;color:#333">PAA29124</div>
<div class="t" style="left:981.6px;top:225.78px;font-size:9.65px;letter-spacing:-0.12px;color:#333">Early Check-in</div>
<div class="t" style="left:1085.46px;top:225.78px;width:101.0px;text-align:center;font-size:9.65px;letter-spacing:0.33px;color:#333">506071</div>
<div class="t" style="left:1186.30px;top:225.78px;width:140.0px;text-align:center;font-size:9.65px;letter-spacing:0px;color:#333">PAA29126</div>
<div class="t" style="left:1463.7px;top:225.78px;font-size:9.65px;letter-spacing:-0.12px;color:#333">Last Minute</div>
<div class="t" style="left:1580.8000000000002px;top:225.78px;font-size:9.65px;letter-spacing:-0.12px;color:#333">LM</div>
<div class="a" style="left:0;top:242.85px;width:1708px;height:24.285px;background:#fff"></div>
<div class="a" style="left:8.1px;top:248.1925px;width:13.6px;height:13.6px;background:#fff;border:1px solid #dadada;border-radius:0.5px"></div>
<div class="t" style="left:32.37px;top:250.04px;width:101.2px;text-align:center;font-size:9.65px;letter-spacing:0.33px;color:#333">1268360</div>
<div class="t" style="left:133.40px;top:250.04px;width:140.1px;text-align:center;font-size:9.65px;letter-spacing:0px;color:#333">RAA11595</div>
<div class="t" style="left:410.5px;top:250.04px;font-size:9.65px;letter-spacing:-0.12px;color:#333">City View Standard Double</div>
<div class="t" style="left:659.56px;top:250.04px;width:73.20000000000005px;text-align:center;font-size:9.65px;letter-spacing:0.33px;color:#333">790309</div>
<div class="t" style="left:732.60px;top:250.04px;width:140.10000000000002px;text-align:center;font-size:9.65px;letter-spacing:0px;color:#333">PAA29124</div>
<div class="t" style="left:981.6px;top:250.04px;font-size:9.65px;letter-spacing:-0.12px;color:#333">Early Check-in</div>
<div class="t" style="left:1085.46px;top:250.04px;width:101.0px;text-align:center;font-size:9.65px;letter-spacing:0.33px;color:#333">544688</div>
<div class="t" style="left:1186.30px;top:250.04px;width:140.0px;text-align:center;font-size:9.65px;letter-spacing:0px;color:#333">PAA82975</div>
<div class="t" style="left:1463.7px;top:250.04px;font-size:9.65px;letter-spacing:-0.12px;color:#333">Last Minute</div>
<div class="t" style="left:1580.8000000000002px;top:250.04px;font-size:9.65px;letter-spacing:-0.12px;color:#333">Promotion test</div>
<div class="a" style="left:0;top:267.135px;width:1708px;height:24.285px;background:#fafafa"></div>
<div class="a" style="left:8.1px;top:272.47749999999996px;width:13.6px;height:13.6px;background:#fff;border:1px solid #dadada;border-radius:0.5px"></div>
<div class="t" style="left:32.37px;top:274.30px;width:101.2px;text-align:center;font-size:9.65px;letter-spacing:0.33px;color:#333">1268360</div>
<div class="t" style="left:133.40px;top:274.30px;width:140.1px;text-align:center;font-size:9.65px;letter-spacing:0px;color:#333">RAA11595</div>
<div class="t" style="left:410.5px;top:274.30px;font-size:9.65px;letter-spacing:-0.12px;color:#333">City View Standard Double</div>
<div class="t" style="left:659.56px;top:274.30px;width:73.20000000000005px;text-align:center;font-size:9.65px;letter-spacing:0.33px;color:#333">790309</div>
<div class="t" style="left:732.60px;top:274.30px;width:140.10000000000002px;text-align:center;font-size:9.65px;letter-spacing:0px;color:#333">PAA29124</div>
<div class="t" style="left:981.6px;top:274.30px;font-size:9.65px;letter-spacing:-0.12px;color:#333">Early Check-in</div>
<div class="t" style="left:1085.46px;top:274.30px;width:101.0px;text-align:center;font-size:9.65px;letter-spacing:0.33px;color:#333">531708</div>
<div class="t" style="left:1186.30px;top:274.30px;width:140.0px;text-align:center;font-size:9.65px;letter-spacing:0px;color:#333">PAA65065</div>
<div class="t" style="left:1463.7px;top:274.30px;font-size:9.65px;letter-spacing:-0.12px;color:#333">Basic Promotion</div>
<div class="t" style="left:1580.8000000000002px;top:274.30px;font-size:9.65px;letter-spacing:-0.12px;color:#333">TEST PRO</div>
<div class="a" style="left:0;top:291.42px;width:1708px;height:24.285px;background:#fff"></div>
<div class="a" style="left:8.1px;top:296.7625px;width:13.6px;height:13.6px;background:#fff;border:1px solid #dadada;border-radius:0.5px"></div>
<div class="t" style="left:32.37px;top:298.56px;width:101.2px;text-align:center;font-size:9.65px;letter-spacing:0.33px;color:#333">2250501</div>
<div class="t" style="left:133.40px;top:298.56px;width:140.1px;text-align:center;font-size:9.65px;letter-spacing:0px;color:#333">RAA18982</div>
<div class="t" style="left:410.5px;top:298.56px;font-size:9.65px;letter-spacing:-0.12px;color:#333">Eco Twin</div>
<div class="t" style="left:659.56px;top:298.56px;width:73.20000000000005px;text-align:center;font-size:9.65px;letter-spacing:0.33px;color:#333">857715</div>
<div class="t" style="left:732.60px;top:298.56px;width:140.10000000000002px;text-align:center;font-size:9.65px;letter-spacing:0px;color:#333">PAB63166</div>
<div class="t" style="left:981.6px;top:298.56px;font-size:9.65px;letter-spacing:-0.12px;color:#333">Non Parking</div>
<div class="t" style="left:1085.46px;top:298.56px;width:101.0px;text-align:center;font-size:9.65px;letter-spacing:0.33px;color:#333">597124</div>
<div class="t" style="left:1186.30px;top:298.56px;width:140.0px;text-align:center;font-size:9.65px;letter-spacing:0px;color:#333">PAB63168</div>
<div class="t" style="left:1463.7px;top:298.56px;font-size:9.65px;letter-spacing:-0.12px;color:#333">Basic Promotion</div>
<div class="t" style="left:1580.8000000000002px;top:298.56px;font-size:9.65px;letter-spacing:-0.12px;color:#333">Basic promo</div>
<div class="a" style="left:0;top:315.705px;width:1708px;height:24.285px;background:#fafafa"></div>
<div class="a" style="left:8.1px;top:321.04749999999996px;width:13.6px;height:13.6px;background:#fff;border:1px solid #dadada;border-radius:0.5px"></div>
<div class="t" style="left:32.37px;top:322.82px;width:101.2px;text-align:center;font-size:9.65px;letter-spacing:0.33px;color:#333">2250501</div>
<div class="t" style="left:133.40px;top:322.82px;width:140.1px;text-align:center;font-size:9.65px;letter-spacing:0px;color:#333">RAA18982</div>
<div class="t" style="left:410.5px;top:322.82px;font-size:9.65px;letter-spacing:-0.12px;color:#333">Eco Twin</div>
<div class="t" style="left:659.56px;top:322.82px;width:73.20000000000005px;text-align:center;font-size:9.65px;letter-spacing:0.33px;color:#333">857715</div>
<div class="t" style="left:732.60px;top:322.82px;width:140.10000000000002px;text-align:center;font-size:9.65px;letter-spacing:0px;color:#333">PAB63166</div>
<div class="t" style="left:981.6px;top:322.82px;font-size:9.65px;letter-spacing:-0.12px;color:#333">Non Parking</div>
<div class="t" style="left:1085.46px;top:322.82px;width:101.0px;text-align:center;font-size:9.65px;letter-spacing:0.33px;color:#333">597125</div>
<div class="t" style="left:1186.30px;top:322.82px;width:140.0px;text-align:center;font-size:9.65px;letter-spacing:0px;color:#333">PAB63169</div>
<div class="t" style="left:1463.7px;top:322.82px;font-size:9.65px;letter-spacing:-0.12px;color:#333">Basic Promotion</div>
<div class="t" style="left:1580.8000000000002px;top:322.82px;font-size:9.65px;letter-spacing:-0.12px;color:#333">Basic promo 2</div>
<div class="a" style="left:0;top:339.99px;width:1708px;height:24.285px;background:#fff"></div>
<div class="a" style="left:8.1px;top:345.3325px;width:13.6px;height:13.6px;background:#fff;border:1px solid #dadada;border-radius:0.5px"></div>
<div class="t" style="left:32.37px;top:347.08px;width:101.2px;text-align:center;font-size:9.65px;letter-spacing:0.33px;color:#333">2240518</div>
<div class="t" style="left:133.40px;top:347.08px;width:140.1px;text-align:center;font-size:9.65px;letter-spacing:0px;color:#333">RAA18671</div>
<div class="t" style="left:410.5px;top:347.08px;font-size:9.65px;letter-spacing:-0.12px;color:#333">Garden View Standard Twin</div>
<div class="t" style="left:659.56px;top:347.08px;width:73.20000000000005px;text-align:center;font-size:9.65px;letter-spacing:0.33px;color:#333">845420</div>
<div class="t" style="left:732.60px;top:347.08px;width:140.10000000000002px;text-align:center;font-size:9.65px;letter-spacing:0px;color:#333">PAB37652</div>
<div class="t" style="left:981.6px;top:347.08px;font-size:9.65px;letter-spacing:-0.12px;color:#333">Free Breakfast</div>
<div class="t" style="left:1085.46px;top:347.08px;width:101.0px;text-align:center;font-size:9.65px;letter-spacing:0.33px;color:#333">580115</div>
<div class="t" style="left:1186.30px;top:347.08px;width:140.0px;text-align:center;font-size:9.65px;letter-spacing:0px;color:#333">PAB39382</div>
<div class="t" style="left:1463.7px;top:347.08px;font-size:9.65px;letter-spacing:-0.12px;color:#333">Basic Promotion</div>
<div class="t" style="left:1580.8000000000002px;top:347.08px;font-size:9.65px;letter-spacing:-0.12px;color:#333">Basic Promotion</div>
<div class="a" style="left:0;top:364.275px;width:1708px;height:24.285px;background:#fafafa"></div>
<div class="a" style="left:8.1px;top:369.61749999999995px;width:13.6px;height:13.6px;background:#fff;border:1px solid #dadada;border-radius:0.5px"></div>
<div class="t" style="left:32.37px;top:371.34px;width:101.2px;text-align:center;font-size:9.65px;letter-spacing:0.33px;color:#333">2240518</div>
<div class="t" style="left:133.40px;top:371.34px;width:140.1px;text-align:center;font-size:9.65px;letter-spacing:0px;color:#333">RAA18671</div>
<div class="t" style="left:410.5px;top:371.34px;font-size:9.65px;letter-spacing:-0.12px;color:#333">Garden View Standard Twin</div>
<div class="t" style="left:659.56px;top:371.34px;width:73.20000000000005px;text-align:center;font-size:9.65px;letter-spacing:0.33px;color:#333">845420</div>
<div class="t" style="left:732.60px;top:371.34px;width:140.10000000000002px;text-align:center;font-size:9.65px;letter-spacing:0px;color:#333">PAB37652</div>
<div class="t" style="left:981.6px;top:371.34px;font-size:9.65px;letter-spacing:-0.12px;color:#333">Free Breakfast</div>
<div class="t" style="left:1085.46px;top:371.34px;width:101.0px;text-align:center;font-size:9.65px;letter-spacing:0.33px;color:#333">585783</div>
<div class="t" style="left:1186.30px;top:371.34px;width:140.0px;text-align:center;font-size:9.65px;letter-spacing:0px;color:#333">PAB46485</div>
<div class="t" style="left:1463.7px;top:371.34px;font-size:9.65px;letter-spacing:-0.12px;color:#333">Basic Promotion</div>
<div class="t" style="left:1580.8000000000002px;top:371.34px;font-size:9.65px;letter-spacing:-0.12px;color:#333">Test Promotion - NRF</div>
<div class="a" style="left:0;top:388.56px;width:1708px;height:24.285px;background:#fff"></div>
<div class="a" style="left:8.1px;top:393.9025px;width:13.6px;height:13.6px;background:#fff;border:1px solid #dadada;border-radius:0.5px"></div>
<div class="t" style="left:32.37px;top:395.60px;width:101.2px;text-align:center;font-size:9.65px;letter-spacing:0.33px;color:#333">1268361</div>
<div class="t" style="left:133.40px;top:395.60px;width:140.1px;text-align:center;font-size:9.65px;letter-spacing:0px;color:#333">RAA11173</div>
<div class="t" style="left:410.5px;top:395.60px;font-size:9.65px;letter-spacing:-0.12px;color:#333">Mountain View Standard Twin</div>
<div class="t" style="left:659.56px;top:395.60px;width:73.20000000000005px;text-align:center;font-size:9.65px;letter-spacing:0.33px;color:#333">790248</div>
<div class="t" style="left:732.60px;top:395.60px;width:140.10000000000002px;text-align:center;font-size:9.65px;letter-spacing:0px;color:#333">PAA29061</div>
<div class="t" style="left:981.6px;top:395.60px;font-size:9.65px;letter-spacing:-0.12px;color:#333">Room Only</div>
<div class="t" style="left:1085.46px;top:395.60px;width:101.0px;text-align:center;font-size:9.65px;letter-spacing:0.33px;color:#333">507321</div>
<div class="t" style="left:1186.30px;top:395.60px;width:140.0px;text-align:center;font-size:9.65px;letter-spacing:0px;color:#333">PAA31278</div>
<div class="t" style="left:1463.7px;top:395.60px;font-size:9.65px;letter-spacing:-0.12px;color:#333">Basic Promotion</div>
<div class="t" style="left:1580.8000000000002px;top:395.60px;font-size:9.65px;letter-spacing:-0.12px;color:#333">Plus</div>
<div class="a" style="left:0;top:412.845px;width:1708px;height:24.285px;background:#fafafa"></div>
<div class="a" style="left:8.1px;top:418.1875px;width:13.6px;height:13.6px;background:#fff;border:1px solid #dadada;border-radius:0.5px"></div>
<div class="t" style="left:32.37px;top:419.86px;width:101.2px;text-align:center;font-size:9.65px;letter-spacing:0.33px;color:#333">1268361</div>
<div class="t" style="left:133.40px;top:419.86px;width:140.1px;text-align:center;font-size:9.65px;letter-spacing:0px;color:#333">RAA11173</div>
<div class="t" style="left:410.5px;top:419.86px;font-size:9.65px;letter-spacing:-0.12px;color:#333">Mountain View Standard Twin</div>
<div class="t" style="left:659.56px;top:419.86px;width:73.20000000000005px;text-align:center;font-size:9.65px;letter-spacing:0.33px;color:#333">790255</div>
<div class="t" style="left:732.60px;top:419.86px;width:140.10000000000002px;text-align:center;font-size:9.65px;letter-spacing:0px;color:#333">PAA29068</div>
<div class="t" style="left:981.6px;top:419.86px;font-size:9.65px;letter-spacing:-0.12px;color:#333">Room Only</div>
<div class="t" style="left:1085.46px;top:419.86px;width:101.0px;text-align:center;font-size:9.65px;letter-spacing:0.33px;color:#333">544695</div>
<div class="t" style="left:1186.30px;top:419.86px;width:140.0px;text-align:center;font-size:9.65px;letter-spacing:0px;color:#333">PAA82982</div>
<div class="t" style="left:1463.7px;top:419.86px;font-size:9.65px;letter-spacing:-0.12px;color:#333">Last Minute</div>
<div class="t" style="left:1580.8000000000002px;top:419.86px;font-size:9.65px;letter-spacing:-0.12px;color:#333">Promotion test</div>
<div class="a" style="left:0;top:437.13px;width:1708px;height:24.285px;background:#fff"></div>
<div class="a" style="left:8.1px;top:442.47249999999997px;width:13.6px;height:13.6px;background:#fff;border:1px solid #dadada;border-radius:0.5px"></div>
<div class="t" style="left:32.37px;top:444.12px;width:101.2px;text-align:center;font-size:9.65px;letter-spacing:0.33px;color:#333">2227653</div>
<div class="t" style="left:133.40px;top:444.12px;width:140.1px;text-align:center;font-size:9.65px;letter-spacing:0px;color:#333">RAA18167</div>
<div class="t" style="left:410.5px;top:444.12px;font-size:9.65px;letter-spacing:-0.12px;color:#333">Ocean View Standard Japanese Western Room</div>
<div class="t" style="left:659.56px;top:444.12px;width:73.20000000000005px;text-align:center;font-size:9.65px;letter-spacing:0.33px;color:#333">840883</div>
<div class="t" style="left:732.60px;top:444.12px;width:140.10000000000002px;text-align:center;font-size:9.65px;letter-spacing:0px;color:#333">PAB28012</div>
<div class="t" style="left:981.6px;top:444.12px;font-size:9.65px;letter-spacing:-0.12px;color:#333">Eco Plan</div>
<div class="t" style="left:1085.46px;top:444.12px;width:101.0px;text-align:center;font-size:9.65px;letter-spacing:0.33px;color:#333">571065</div>
<div class="t" style="left:1186.30px;top:444.12px;width:140.0px;text-align:center;font-size:9.65px;letter-spacing:0px;color:#333">PAB28013</div>
<div class="t" style="left:1463.7px;top:444.12px;font-size:9.65px;letter-spacing:-0.12px;color:#333">Basic Promotion</div>
<div class="t" style="left:1580.8000000000002px;top:444.12px;font-size:9.65px;letter-spacing:-0.12px;color:#333">summer vacation</div>
<div class="a" style="left:0;top:461.415px;width:1708px;height:24.285px;background:#fafafa"></div>
<div class="a" style="left:8.1px;top:466.7575px;width:13.6px;height:13.6px;background:#fff;border:1px solid #dadada;border-radius:0.5px"></div>
<div class="t" style="left:32.37px;top:468.38px;width:101.2px;text-align:center;font-size:9.65px;letter-spacing:0.33px;color:#333">2227653</div>
<div class="t" style="left:133.40px;top:468.38px;width:140.1px;text-align:center;font-size:9.65px;letter-spacing:0px;color:#333">RAA18167</div>
<div class="t" style="left:410.5px;top:468.38px;font-size:9.65px;letter-spacing:-0.12px;color:#333">Ocean View Standard Japanese Western Room</div>
<div class="t" style="left:659.56px;top:468.38px;width:73.20000000000005px;text-align:center;font-size:9.65px;letter-spacing:0.33px;color:#333">848203</div>
<div class="t" style="left:732.60px;top:468.38px;width:140.10000000000002px;text-align:center;font-size:9.65px;letter-spacing:0px;color:#333">PAB43496</div>
<div class="t" style="left:981.6px;top:468.38px;font-size:9.65px;letter-spacing:-0.12px;color:#333">Room Only</div>
<div class="t" style="left:1085.46px;top:468.38px;width:101.0px;text-align:center;font-size:9.65px;letter-spacing:0.33px;color:#333">583584</div>
<div class="t" style="left:1186.30px;top:468.38px;width:140.0px;text-align:center;font-size:9.65px;letter-spacing:0px;color:#333">PAB43497</div>
<div class="t" style="left:1463.7px;top:468.38px;font-size:9.65px;letter-spacing:-0.12px;color:#333">Min &amp; Max Nights</div>
<div class="t" style="left:1580.8000000000002px;top:468.38px;font-size:9.65px;letter-spacing:-0.12px;color:#333">Min 02 nights</div>
<div class="a" style="left:32px;top:0;width:1px;height:485.7px;background:#e4e4e4"></div>
<div class="a" style="left:133px;top:0;width:1px;height:485.7px;background:#e4e4e4"></div>
<div class="a" style="left:273px;top:0;width:1px;height:485.7px;background:#e4e4e4"></div>
<div class="a" style="left:402px;top:0;width:1px;height:485.7px;background:#e4e4e4"></div>
<div class="a" style="left:659px;top:0;width:1px;height:485.7px;background:#e4e4e4"></div>
<div class="a" style="left:732px;top:0;width:1px;height:485.7px;background:#e4e4e4"></div>
<div class="a" style="left:872px;top:0;width:1px;height:485.7px;background:#e4e4e4"></div>
<div class="a" style="left:973px;top:0;width:1px;height:485.7px;background:#e4e4e4"></div>
<div class="a" style="left:1085px;top:0;width:1px;height:485.7px;background:#e4e4e4"></div>
<div class="a" style="left:1186px;top:0;width:1px;height:485.7px;background:#e4e4e4"></div>
<div class="a" style="left:1326px;top:0;width:1px;height:485.7px;background:#e4e4e4"></div>
<div class="a" style="left:1454px;top:0;width:1px;height:485.7px;background:#e4e4e4"></div>
<div class="a" style="left:1572px;top:0;width:1px;height:485.7px;background:#e4e4e4"></div>
</div>
<div class="a" style="left:75px;top:289px;width:1708px;height:1px;background:#dcdcdc"></div>
<div class="a" style="left:75px;top:775.0px;width:1708px;height:15.399999999999977px;background:#fafafa"></div>
<div class="a" style="left:93px;top:777.9px;width:1322px;height:9.2px;border-radius:4.6px;background:#8a8a8a"></div>
<svg style="left:0;top:0" width="1800" height="800"><path d="M79.8 782.5 L86.3 778.6 L86.3 786.4 Z" fill="#7d7d7d" stroke="#7d7d7d" stroke-width="0.8" stroke-linejoin="round"/><path d="M1778.2 782.5 L1771.7 778.6 L1771.7 786.4 Z" fill="#7d7d7d" stroke="#7d7d7d" stroke-width="0.8" stroke-linejoin="round"/></svg>
<div class="a" style="left:75px;top:790.4px;width:1708px;height:36.5px;background:#f1f1f1;border-top:1px solid #7c7c7c;border-bottom:1px solid #7c7c7c"></div>
<div class="a" style="left:127px;top:797px;width:22.8px;height:22.75px;background:#f5d7d7"></div>
<div class="t" style="left:127px;top:802px;width:22.8px;text-align:center;font-size:10.6px;color:#ff7a6e">1</div>
<div class="t" style="left:150px;top:802px;width:23px;text-align:center;font-size:10.6px;color:#ff4f4f">2</div>
<svg style="left:0;top:0" width="300" height="900"><g fill="#777"><rect x="89.2" y="804" width="1.3" height="6.4"/><path d="M95.8 804 L90.5 807.2 L95.8 810.4 Z"/><path d="M118.75 804 L113.3 807.2 L118.75 810.4 Z"/></g><g fill="#111"><path d="M181.25 804 L187 807.2 L181.25 810.4 Z"/><path d="M203.75 804 L209 807.2 L203.75 810.4 Z"/><rect x="209.1" y="804" width="1.3" height="6.4"/></g></svg>
<div class="t" style="right:33.8px;top:802.2px;font-size:10.8px;color:#222">1 - 20 of 22 items</div>
<div class="a" style="left:1641px;top:835px;width:66.5px;height:18.799999999999955px;background:#fff;border:1px solid #9a9a9a;border-radius:2px"></div>
<div class="t" style="left:1641px;top:839.5px;width:66.5px;text-align:center;font-size:9.8px;color:#111">Grid Save</div>
<div class="a" style="left:1712px;top:835px;width:70.79999999999995px;height:18.799999999999955px;background:#fff;border:1px solid #9a9a9a;border-radius:2px"></div>
<div class="t" style="left:1712px;top:839.5px;width:70.79999999999995px;text-align:center;font-size:9.8px;color:#111">Grid Reset</div>
<div class="a" style="left:196.4px;top:251.1px;width:152.49999999999997px;height:43.00000000000003px;border:5px solid #e31a1c"></div>
<div class="a" style="left:794.9px;top:249.2px;width:144.10000000000002px;height:46.400000000000034px;border:5px solid #e31a1c"></div>
<div class="a" style="left:1245.7px;top:246.3px;width:154.0999999999999px;height:43.30000000000001px;border:5px solid #e31a1c"></div>
</body></html>
